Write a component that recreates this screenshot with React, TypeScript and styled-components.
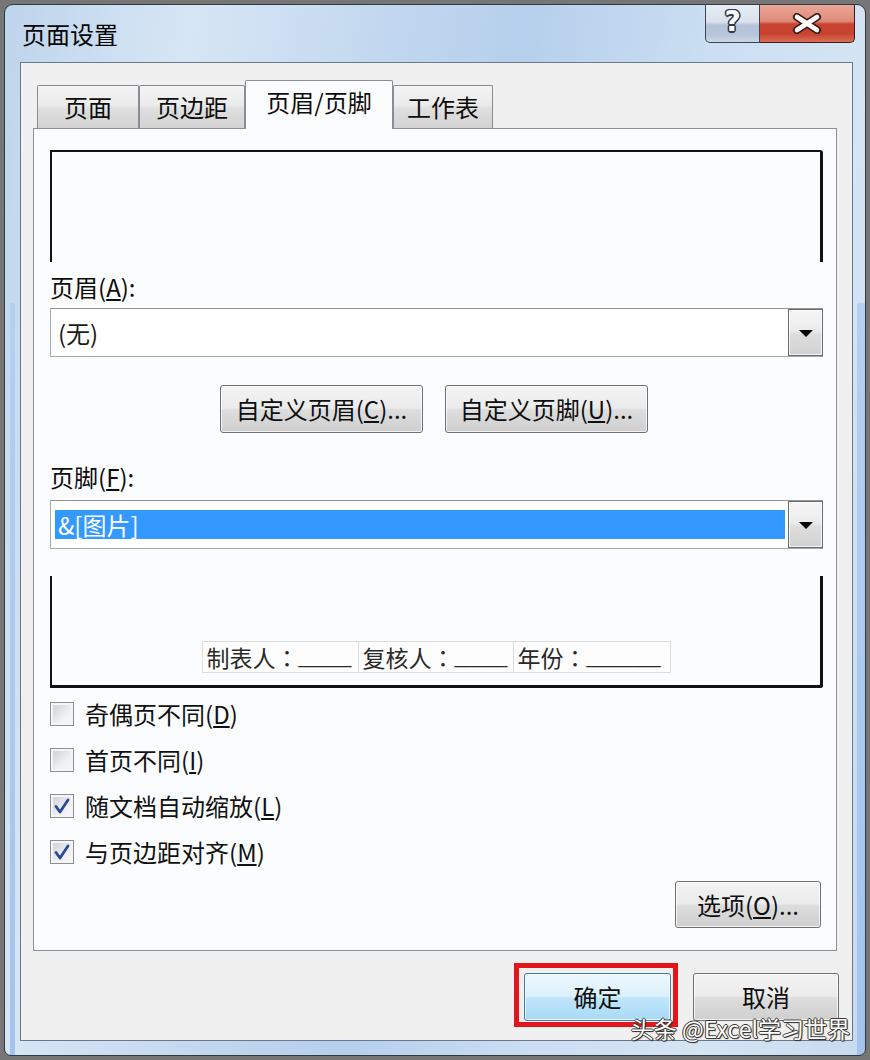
import React from "react";
import styled, { createGlobalStyle, css } from "styled-components";

const FONT = `"Noto Sans CJK SC", "Noto Sans", sans-serif`;

const GlobalStyle = createGlobalStyle`
  html, body { margin: 0; padding: 0; }
  body {
    background: #767676;
    font-family: ${FONT};
    color: #111;
    overflow: hidden;
  }
  #root { width: 870px; height: 1060px; }
`;

const Window = styled.div`
  position: relative;
  box-sizing: border-box;
  width: 862px;
  height: 1052px;
  margin: 4px 0 0 4px;
  border: 1px solid #333941;
  border-radius: 9px 9px 7px 7px;
  display: flex;
  flex-direction: column;
  background:
    linear-gradient(#b4d0f1, #a2c4ee) 5px 298px / 5px calc(100% - 298px) no-repeat,
    linear-gradient(#b4d0f1, #a2c4ee) right 0 top 298px / 8px calc(100% - 298px) no-repeat,
    linear-gradient(100deg, #bed4ec 0%, #d7e6f5 18%, #c3d8ef 36%, #b5cfec 50%, #cbdef2 68%, #d6e5f4 84%, #c6daef 100%);
`;

const TitleBar = styled.div`
  flex-shrink: 0;
  height: 57px;
  display: flex;
  align-items: flex-start;
  padding: 0 10px 0 17px;
`;

const Title = styled.h1`
  flex: 1;
  margin: 0;
  align-self: center;
  font-size: 24px;
  font-weight: 400;
  line-height: 30px;
  color: #050505;
`;

const CaptionGroup = styled.div`
  display: flex;
`;

const CaptionButton = styled.div<{ $close?: boolean }>`
  box-sizing: border-box;
  height: 38px;
  display: flex;
  align-items: center;
  justify-content: center;
  border: 1px solid #3b4757;
  border-top: none;
  ${(p) =>
    p.$close
      ? css`
          width: 95px;
          border-left: none;
          border-color: #3a1c18;
          border-bottom-right-radius: 5px;
          background: linear-gradient(#eaa797 0%, #de8b7a 44%, #c9432f 52%, #c6432f 78%, #dc6e58 100%);
        `
      : css`
          width: 55px;
          border-bottom-left-radius: 5px;
          background: linear-gradient(#e6edf5 0%, #d9e2ed 46%, #b4c3d7 54%, #b6c5d9 80%, #c9d6e6 100%);
        `}
`;

const HelpGlyph = styled.span`
  font-family: "DejaVu Sans", sans-serif;
  font-weight: 700;
  font-size: 28px;
  line-height: 28px;
  margin-top: -3px;
  color: #fff;
  text-shadow: -1.5px 0 0 #2c3848, 1.5px 0 0 #2c3848, 0 -1.5px 0 #2c3848, 0 1.5px 0 #2c3848,
    -1px -1px 0 #2c3848, 1px 1px 0 #2c3848, -1px 1px 0 #2c3848, 1px -1px 0 #2c3848;
`;

const Client = styled.div`
  flex: 1;
  margin: 0 12px 14px 15px;
  border: 1px solid #69788a;
  background: #f0f0f0;
  padding: 17px 15px 18px 12px;
  display: flex;
  flex-direction: column;
`;

const TabStrip = styled.div`
  display: flex;
  align-items: flex-end;
  height: 48px;
  padding-left: 4px;
`;

const Tab = styled.div<{ $active?: boolean; $w: number }>`
  box-sizing: border-box;
  width: ${(p) => p.$w}px;
  display: flex;
  align-items: center;
  justify-content: center;
  font-size: 24px;
  line-height: 30px;
  color: #0d0d0d;
  border: 1px solid #898c95;
  border-bottom: none;
  border-radius: 2px 2px 0 0;
  ${(p) =>
    p.$active
      ? css`
          height: 49px;
          margin-bottom: -1px;
          padding-bottom: 6px;
          background: #fbfcfd;
          position: relative;
          z-index: 1;
        `
      : css`
          height: 43px;
          background: linear-gradient(#f4f4f4, #ebebeb 45%, #dedede 55%, #d3d3d3);
        `}
`;

const Panel = styled.div`
  border: 1px solid #8d9097;
  background: #fbfcfd;
  padding: 21px 13px 22px 16px;
  display: flex;
  flex-direction: column;
`;

const HeaderPreview = styled.div`
  box-sizing: border-box;
  height: 112px;
  border-top: 2px solid #121212;
  border-left: 2px solid #121212;
  border-right: 3px solid #121212;
  border-top-right-radius: 3px;
`;

const FooterPreview = styled.div`
  box-sizing: border-box;
  height: 112px;
  margin-top: 27px;
  border-left: 2px solid #121212;
  border-right: 3px solid #121212;
  border-bottom: 3px solid #121212;
  border-bottom-right-radius: 3px;
  display: flex;
  align-items: flex-end;
  justify-content: center;
  padding-bottom: 12px;
`;

const FooterTable = styled.div`
  display: flex;
  border: 1px solid #dcdcdc;
  background: #fdfdfd;
`;

const FooterCell = styled.div<{ $w: number }>`
  box-sizing: border-box;
  width: ${(p) => p.$w}px;
  height: 30px;
  padding-left: 4px;
  display: flex;
  align-items: center;
  font-size: 23px;
  line-height: 30px;
  color: #2a2a2a;
  & + & {
    border-left: 1px solid #dcdcdc;
  }
`;

const Colon = styled.span`
  font-family: "Noto Sans CJK TC", "Noto Sans CJK SC", sans-serif;
`;

const Blank = styled.span`
  font-family: "Liberation Sans", sans-serif;
  font-size: 19px;
  line-height: 30px;
  color: #2a2a2a;
`;

const FieldLabel = styled.div<{ $mt: number; $mb: number }>`
  margin-top: ${(p) => p.$mt}px;
  margin-bottom: ${(p) => p.$mb}px;
  font-size: 24px;
  line-height: 30px;
  color: #0d0d0d;
`;

const Combo = styled.div`
  box-sizing: border-box;
  height: 49px;
  display: flex;
  align-items: center;
  border: 1px solid #a8aab0;
  border-top-color: #909297;
  background: #fff;
`;

const ComboValue = styled.div<{ $selected?: boolean }>`
  flex: 1;
  height: 29px;
  font-size: 24px;
  line-height: 29px;
  ${(p) =>
    p.$selected
      ? css`
          margin: 0 3px 0 4px;
          padding-left: 3px;
          background: #3399ff;
          color: #fff;
        `
      : css`
          padding-left: 7px;
          color: #1a1a1a;
        `}
`;

const DropButton = styled.div`
  box-sizing: border-box;
  width: 35px;
  align-self: stretch;
  margin-right: -1px;
  border: 1px solid #6c6c6c;
  background: linear-gradient(#f5f5f5, #ececec 45%, #dddddd 55%, #d2d2d2);
  box-shadow: inset 0 0 0 1px rgba(255, 255, 255, 0.7);
  display: flex;
  align-items: center;
  justify-content: center;
`;

const Arrow = styled.span`
  width: 0;
  height: 0;
  margin-top: 2px;
  border-left: 7px solid transparent;
  border-right: 7px solid transparent;
  border-top: 7px solid #000;
`;

const ButtonRow = styled.div`
  display: flex;
  justify-content: center;
  gap: 22px;
  margin-top: 28px;
  padding-right: 5px;
`;

const WinButton = styled.button<{ $w: number; $h?: number; $primary?: boolean }>`
  box-sizing: border-box;
  width: ${(p) => p.$w}px;
  height: ${(p) => p.$h ?? 48}px;
  padding: 0;
  font-family: ${FONT};
  font-size: 24px;
  line-height: 30px;
  color: #0f0f0f;
  border-radius: 3px;
  box-shadow: inset 0 0 0 1px rgba(255, 255, 255, 0.75);
  ${(p) =>
    p.$primary
      ? css`
          border: 1px solid #3c7fb1;
          background: linear-gradient(#ecf7fd, #dcf1fc 48%, #bfe5fa 52%, #a9daf6);
        `
      : css`
          border: 1px solid #707070;
          background: linear-gradient(#f3f3f3, #ebebeb 48%, #dddddd 52%, #cfcfcf);
        `}
`;

const CheckList = styled.div`
  margin-top: 3px;
  display: flex;
  flex-direction: column;
`;

const CheckRow = styled.label`
  display: flex;
  align-items: center;
  gap: 11px;
  height: 46px;
  font-size: 24px;
  line-height: 30px;
  color: #111;
`;

const CheckBox = styled.span`
  box-sizing: border-box;
  width: 24px;
  height: 24px;
  flex-shrink: 0;
  border: 1px solid #8f8f8f;
  background: linear-gradient(135deg, #cacdd2, #eef0f2 60%, #f8f8f8);
  box-shadow: inset 0 0 0 2px #f5f5f5;
  display: flex;
  align-items: center;
  justify-content: center;
`;

const OptionsRow = styled.div`
  display: flex;
  justify-content: flex-end;
  margin-top: 6px;
  padding-right: 2px;
`;

const DialogFooter = styled.div`
  display: flex;
  justify-content: flex-end;
  gap: 22px;
  margin-top: 22px;
  margin-right: -2px;
`;

const Annotated = styled.div`
  position: relative;
  display: flex;
`;

const RedFrame = styled.div`
  position: absolute;
  top: -10px;
  left: -10px;
  right: -7px;
  bottom: -6px;
  border: 5px solid #e3141c;
  pointer-events: none;
`;

const Watermark = styled.div`
  position: absolute;
  right: 15px;
  bottom: 17px;
  font-size: 23px;
  line-height: 20px;
  color: #fff;
  white-space: nowrap;
  text-shadow: -1px 0 0 #3a3a3a, 1px 0 0 #3a3a3a, 0 -1px 0 #3a3a3a, 0 1px 0 #3a3a3a,
    1px 1px 1px #222;
`;

const Check = () => (
  <svg width="18" height="18" viewBox="0 0 18 18">
    <path
      d="M3 9.5 L7 15 L15 3"
      fill="none"
      stroke="#2b4a94"
      strokeWidth="2.8"
      strokeLinecap="round"
      strokeLinejoin="round"
    />
  </svg>
);

const CloseGlyph = () => (
  <svg width="30" height="21" viewBox="0 0 30 21">
    <path d="M5 4 L25 17 M25 4 L5 17" stroke="#3a1a16" strokeWidth="8" strokeLinecap="round" />
    <path d="M5 4 L25 17 M25 4 L5 17" stroke="#ffffff" strokeWidth="4.6" strokeLinecap="round" />
  </svg>
);

const options: { label: string; key: string; checked: boolean }[] = [
  { label: "奇偶页不同", key: "D", checked: false },
  { label: "首页不同", key: "I", checked: false },
  { label: "随文档自动缩放", key: "L", checked: true },
  { label: "与页边距对齐", key: "M", checked: true },
];

export default function App() {
  return (
    <>
      <GlobalStyle />
      <Window>
        <TitleBar>
          <Title>页面设置</Title>
          <CaptionGroup>
            <CaptionButton>
              <HelpGlyph>?</HelpGlyph>
            </CaptionButton>
            <CaptionButton $close>
              <CloseGlyph />
            </CaptionButton>
          </CaptionGroup>
        </TitleBar>
        <Client>
          <TabStrip>
            <Tab $w={102}>页面</Tab>
            <Tab $w={106}>页边距</Tab>
            <Tab $w={148} $active>
              页眉/页脚
            </Tab>
            <Tab $w={100}>工作表</Tab>
          </TabStrip>
          <Panel>
            <HeaderPreview />
            <FieldLabel $mt={10} $mb={6}>
              页眉(<u>A</u>):
            </FieldLabel>
            <Combo>
              <ComboValue>(无)</ComboValue>
              <DropButton>
                <Arrow />
              </DropButton>
            </Combo>
            <ButtonRow>
              <WinButton $w={203}>
                自定义页眉(<u>C</u>)...
              </WinButton>
              <WinButton $w={203}>
                自定义页脚(<u>U</u>)...
              </WinButton>
            </ButtonRow>
            <FieldLabel $mt={29} $mb={8}>
              页脚(<u>F</u>):
            </FieldLabel>
            <Combo>
              <ComboValue $selected>&amp;[图片]</ComboValue>
              <DropButton>
                <Arrow />
              </DropButton>
            </Combo>
            <FooterPreview>
              <FooterTable>
                <FooterCell $w={155}>
                  制表人<Colon>：</Colon>
                  <Blank>_____</Blank>
                </FooterCell>
                <FooterCell $w={155}>
                  复核人<Colon>：</Colon>
                  <Blank>_____</Blank>
                </FooterCell>
                <FooterCell $w={157}>
                  年份<Colon>：</Colon>
                  <Blank>_______</Blank>
                </FooterCell>
              </FooterTable>
            </FooterPreview>
            <CheckList>
              {options.map((o) => (
                <CheckRow key={o.key}>
                  <CheckBox>{o.checked && <Check />}</CheckBox>
                  <span>
                    {o.label}(<u>{o.key}</u>)
                  </span>
                </CheckRow>
              ))}
            </CheckList>
            <OptionsRow>
              <WinButton $w={146} $h={47}>
                选项(<u>O</u>)...
              </WinButton>
            </OptionsRow>
          </Panel>
          <DialogFooter>
            <Annotated>
              <WinButton $w={147} $primary>
                确定
              </WinButton>
              <RedFrame />
            </Annotated>
            <WinButton $w={146}>取消</WinButton>
          </DialogFooter>
        </Client>
        <Watermark>头条 @Excel学习世界</Watermark>
      </Window>
    </>
  );
}
